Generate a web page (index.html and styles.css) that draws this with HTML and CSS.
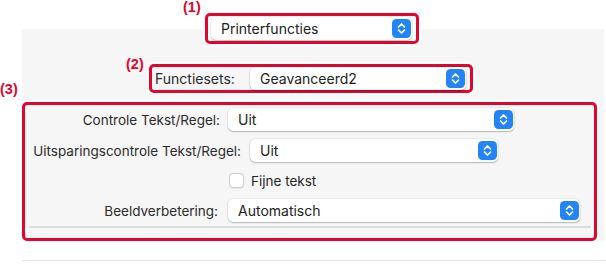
FILE: index.html
```html
<!DOCTYPE html>
<html lang="nl">
<head>
    <meta charset="UTF-8">
    <meta name="viewport" content="width=device-width, initial-scale=1.0">
    <title>Printerfuncties</title>
    <link rel="stylesheet" href="styles.css">
</head>
<body>
    <div class="top">
        <div class="callout callout-1">
            <span class="mark mark-1">(1)</span>
            <div class="popup popup-print">
                <span class="popup-text">Printerfuncties</span>
                <svg class="stepper" width="19" height="19" viewBox="0 0 19 19"><rect width="19" height="19" rx="4.5" fill="#2384f8"/><polyline points="6.5,8 9.5,5 12.5,8" fill="none" stroke="#fff" stroke-width="1.7" stroke-linecap="round" stroke-linejoin="round"/><polyline points="6.5,11 9.5,14 12.5,11" fill="none" stroke="#fff" stroke-width="1.7" stroke-linecap="round" stroke-linejoin="round"/></svg>
            </div>
        </div>
    </div>

    <div class="panel">
        <div class="callout callout-2">
            <span class="mark mark-2">(2)</span>
            <span class="sets-label">Functiesets:</span>
            <div class="popup popup-sets">
                <span class="popup-text">Geavanceerd2</span>
                <svg class="stepper" width="19" height="19" viewBox="0 0 19 19"><rect width="19" height="19" rx="4.5" fill="#2384f8"/><polyline points="6.5,8 9.5,5 12.5,8" fill="none" stroke="#fff" stroke-width="1.7" stroke-linecap="round" stroke-linejoin="round"/><polyline points="6.5,11 9.5,14 12.5,11" fill="none" stroke="#fff" stroke-width="1.7" stroke-linecap="round" stroke-linejoin="round"/></svg>
            </div>
        </div>

        <div class="callout callout-3">
            <span class="mark mark-3">(3)</span>

            <div class="opt opt-controle">
                <span class="opt-label">Controle Tekst/Regel:</span>
                <div class="popup popup-controle">
                    <span class="popup-text">Uit</span>
                    <svg class="stepper" width="19" height="19" viewBox="0 0 19 19"><rect width="19" height="19" rx="4.5" fill="#2384f8"/><polyline points="6.5,8 9.5,5 12.5,8" fill="none" stroke="#fff" stroke-width="1.7" stroke-linecap="round" stroke-linejoin="round"/><polyline points="6.5,11 9.5,14 12.5,11" fill="none" stroke="#fff" stroke-width="1.7" stroke-linecap="round" stroke-linejoin="round"/></svg>
                </div>
            </div>

            <div class="opt opt-uitsparing">
                <span class="opt-label">Uitsparingscontrole Tekst/Regel:</span>
                <div class="popup popup-uitsparing">
                    <span class="popup-text">Uit</span>
                    <svg class="stepper" width="19" height="19" viewBox="0 0 19 19"><rect width="19" height="19" rx="4.5" fill="#2384f8"/><polyline points="6.5,8 9.5,5 12.5,8" fill="none" stroke="#fff" stroke-width="1.7" stroke-linecap="round" stroke-linejoin="round"/><polyline points="6.5,11 9.5,14 12.5,11" fill="none" stroke="#fff" stroke-width="1.7" stroke-linecap="round" stroke-linejoin="round"/></svg>
                </div>
            </div>

            <div class="opt opt-check">
                <span class="checkbox"></span>
                <span class="check-text">Fijne tekst</span>
            </div>

            <div class="opt opt-beeld">
                <span class="opt-label">Beeldverbetering:</span>
                <div class="popup popup-beeld">
                    <span class="popup-text">Automatisch</span>
                    <svg class="stepper" width="19" height="19" viewBox="0 0 19 19"><rect width="19" height="19" rx="4.5" fill="#2384f8"/><polyline points="6.5,8 9.5,5 12.5,8" fill="none" stroke="#fff" stroke-width="1.7" stroke-linecap="round" stroke-linejoin="round"/><polyline points="6.5,11 9.5,14 12.5,11" fill="none" stroke="#fff" stroke-width="1.7" stroke-linecap="round" stroke-linejoin="round"/></svg>
                </div>
            </div>

            <div class="sep"></div>
        </div>
    </div>

    <div class="bottom-line"></div>
</body>
</html>
```

FILE: styles.css
```css
body {
    margin: 0;
    background-color: #ffffff;
    font-family: "Inter", "Noto Sans", sans-serif;
    font-size: 13.5px;
    color: #262626;
}

/* annotation boxes */
.callout {
    position: relative;
    box-sizing: border-box;
    border: 3px solid #e0062f;
    border-radius: 5px;
    box-shadow: 0 0 0 2px #ffffff;
}

.mark {
    position: absolute;
    font-family: "Liberation Sans", Arial, sans-serif;
    font-weight: bold;
    font-size: 14.5px;
    line-height: 15px;
    color: #e0062f;
}

.mark-1 {
    left: -25px;
    top: -16px;
}

.mark-2 {
    left: -26px;
    top: -10px;
}

.mark-3 {
    left: -25px;
    top: -23px;
}

.top {
    display: flex;
    align-items: flex-start;
    height: 29px;
    padding-left: 205px;
}

.callout-1 {
    z-index: 1;
    width: 214px;
    height: 31px;
    margin-top: 13px;
    padding: 1px 4px 1px 3px;
    background-color: #ffffff;
}

.panel {
    margin-left: 22px;
    width: 582px;
    padding-top: 35px;
    background-color: #f6f6f6;
}

.callout-2 {
    display: flex;
    align-items: center;
    width: 324px;
    height: 29px;
    margin-left: 127px;
    padding-right: 4px;
}

.sets-label {
    box-sizing: border-box;
    width: 98px;
    padding-left: 3px;
    font-size: 14px;
    color: #2b2b2b;
}

.callout-3 {
    width: 575px;
    margin-top: 9px;
    padding: 3px 0 10px 0;
}

/* popup buttons */
.popup {
    box-sizing: border-box;
    display: flex;
    align-items: center;
    justify-content: space-between;
    height: 23px;
    padding: 0 1px 0 10px;
    background-color: #ffffff;
    border-radius: 5px;
    box-shadow: 0 0 0 0.5px rgba(0, 0, 0, 0.1), 0 1px 1.5px rgba(0, 0, 0, 0.22);
    font-size: 14px;
    color: #222;
}

.stepper {
    display: block;
}

.popup-print {
    width: 201px;
}

.popup-sets {
    width: 216px;
    height: 23px;
}

.popup-controle {
    width: 286px;
}

.popup-uitsparing {
    width: 248px;
}

.popup-beeld {
    width: 352px;
}

/* option rows */
.opt {
    display: flex;
    align-items: center;
}

.opt-label {
    box-sizing: border-box;
    width: 203px;
    padding-right: 8px;
    text-align: right;
    color: #2b2b2b;
}

.opt-uitsparing {
    margin-top: 8px;
}

.opt-uitsparing .opt-label {
    width: 225px;
    padding-right: 9px;
}

.opt-check {
    height: 17px;
    margin-top: 10px;
    padding-left: 204px;
}

.checkbox {
    box-sizing: border-box;
    width: 15px;
    height: 15px;
    background-color: #ffffff;
    border: 1px solid #cfcfcf;
    border-radius: 4px;
    box-shadow: 0 0.5px 1px rgba(0, 0, 0, 0.08);
}

.check-text {
    margin-left: 7px;
}

.opt-beeld {
    margin-top: 10px;
}

.opt-beeld .opt-label {
    padding-right: 10px;
}

.sep {
    height: 2px;
    margin: 4px 3px 0 4px;
    background-color: #dcdcdc;
}

.bottom-line {
    height: 1px;
    margin-top: 19px;
    margin-left: 22px;
    background-color: #e4e4e4;
}
```
